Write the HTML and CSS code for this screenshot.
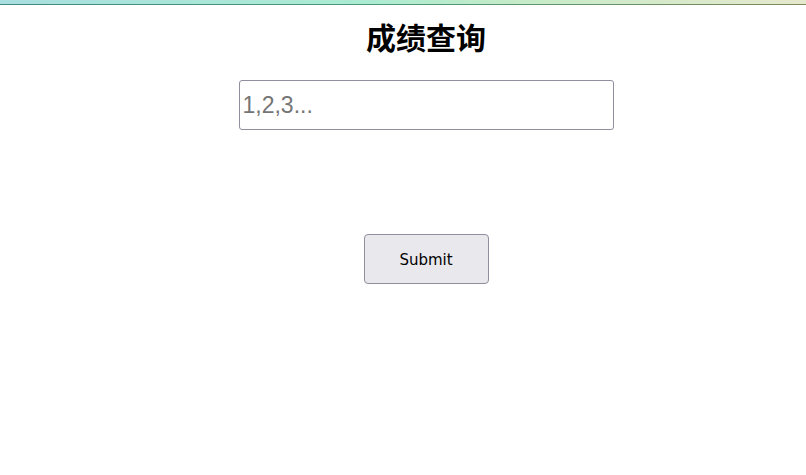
FILE: index.html
```html
<!DOCTYPE html>
<html lang="zh">
<head>
    <meta charset="UTF-8">
    <meta name="viewport" content="width=device-width, initial-scale=1.0">
    <title>成绩查询</title>
    <link rel="stylesheet" href="styles.css">
</head>
<body>

    <!-- Top Stripe -->
    <div class="top-bar"></div>

    <!-- Query Form -->
    <div class="container">
        <h1 class="title">成绩查询</h1>
        <input type="text" class="query-input" id="queryInput" placeholder="1,2,3...">
        <button class="submit-btn" id="submitBtn">Submit</button>
    </div>

</body>
</html>
```

FILE: styles.css
```css
body {
    margin: 0;
    padding: 0;
    background-color: #fff;
    font-family: "DejaVu Sans", Verdana, sans-serif;
}
.top-bar {
    height: 4px;
    background: linear-gradient(90deg, #a9dfe0 0%, #abebd2 45%, #c6ebc8 65%, #e6e8cc 100%);
    border-bottom: 1px solid #4a8a78;
    border-image: linear-gradient(90deg, #3f8a82, #4e9a78 50%, #808a5c) 1;
}
.container {
    display: flex;
    flex-direction: column;
    align-items: center;
    padding-left: 46px;
}
.title {
    font-family: "Noto Sans CJK SC", sans-serif;
    font-size: 30px;
    font-weight: bold;
    margin: 10px 0 0;
    line-height: 42px;
}
.query-input {
    box-sizing: border-box;
    width: 375px;
    height: 50px;
    margin-top: 23px;
    padding: 1px 3px 0;
    border: 1px solid #8f8f9d;
    border-radius: 3px;
    font-family: "Liberation Sans", Arial, sans-serif;
    font-size: 23px;
}
.query-input::placeholder {
    color: #757575;
}
.submit-btn {
    box-sizing: border-box;
    width: 125px;
    height: 50px;
    margin-top: 104px;
    padding-top: 3px;
    background-color: #e9e8ed;
    border: 1px solid #8f8f9d;
    border-radius: 4px;
    font-family: "DejaVu Sans", Verdana, sans-serif;
    font-size: 15px;
    color: #000;
}
```
